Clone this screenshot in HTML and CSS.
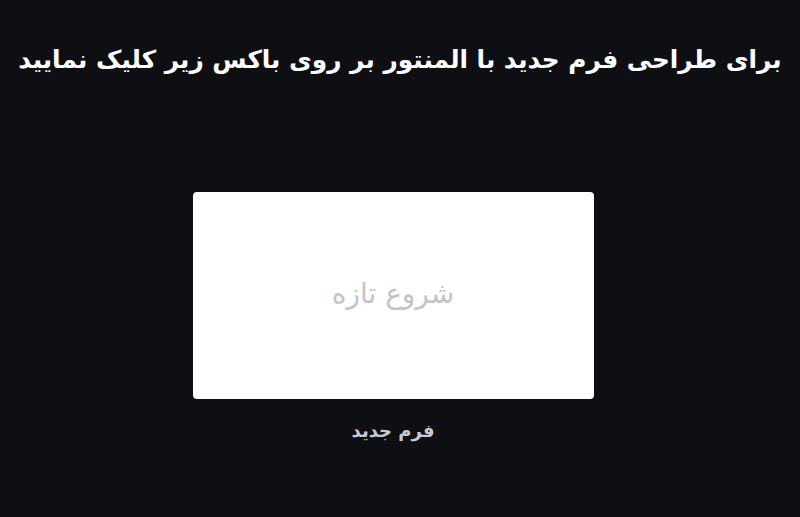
FILE: index.html
```html
<!DOCTYPE html>
<html lang="fa" dir="rtl">
<head>
<meta charset="utf-8">
<link rel="stylesheet" href="styles.css">
</head>
<body>
<main class="page">
  <h1 class="title">برای طراحی فرم جدید با المنتور بر روی باکس زیر کلیک نمایید</h1>
  <div class="templates">
    <div class="template">
      <div class="card">
        <span class="card-label">شروع تازه</span>
      </div>
      <div class="caption">فرم جدید</div>
    </div>
  </div>
</main>
</body>
</html>
```

FILE: styles.css
```css
html, body {
  margin: 0;
  padding: 0;
  background: #0e0f13;
  height: 100%;
}
body {
  font-family: "DejaVu Sans", "Noto Sans", sans-serif;
  color: #fff;
}
.page {
  display: flex;
  flex-direction: column;
  align-items: center;
  padding-top: 36px;
}
.title {
  margin: 0;
  font-size: 24.8px;
  font-weight: bold;
  color: #fff;
  line-height: 48px;
  text-align: center;
  width: 100%;
}
.templates {
  display: flex;
  justify-content: center;
  margin-top: 108px;
  padding-right: 14px;
}
.template {
  display: flex;
  flex-direction: column;
  align-items: center;
}
.card {
  width: 401px;
  height: 207px;
  background: #fff;
  border-radius: 4px;
  display: flex;
  align-items: center;
  justify-content: center;
  box-sizing: border-box;
  padding-bottom: 4px;
}
.card-label {
  font-size: 28px;
  color: #c3c3c6;
}
.caption {
  margin-top: 21px;
  font-size: 18px;
  font-weight: bold;
  color: #c9cad0;
}
```
